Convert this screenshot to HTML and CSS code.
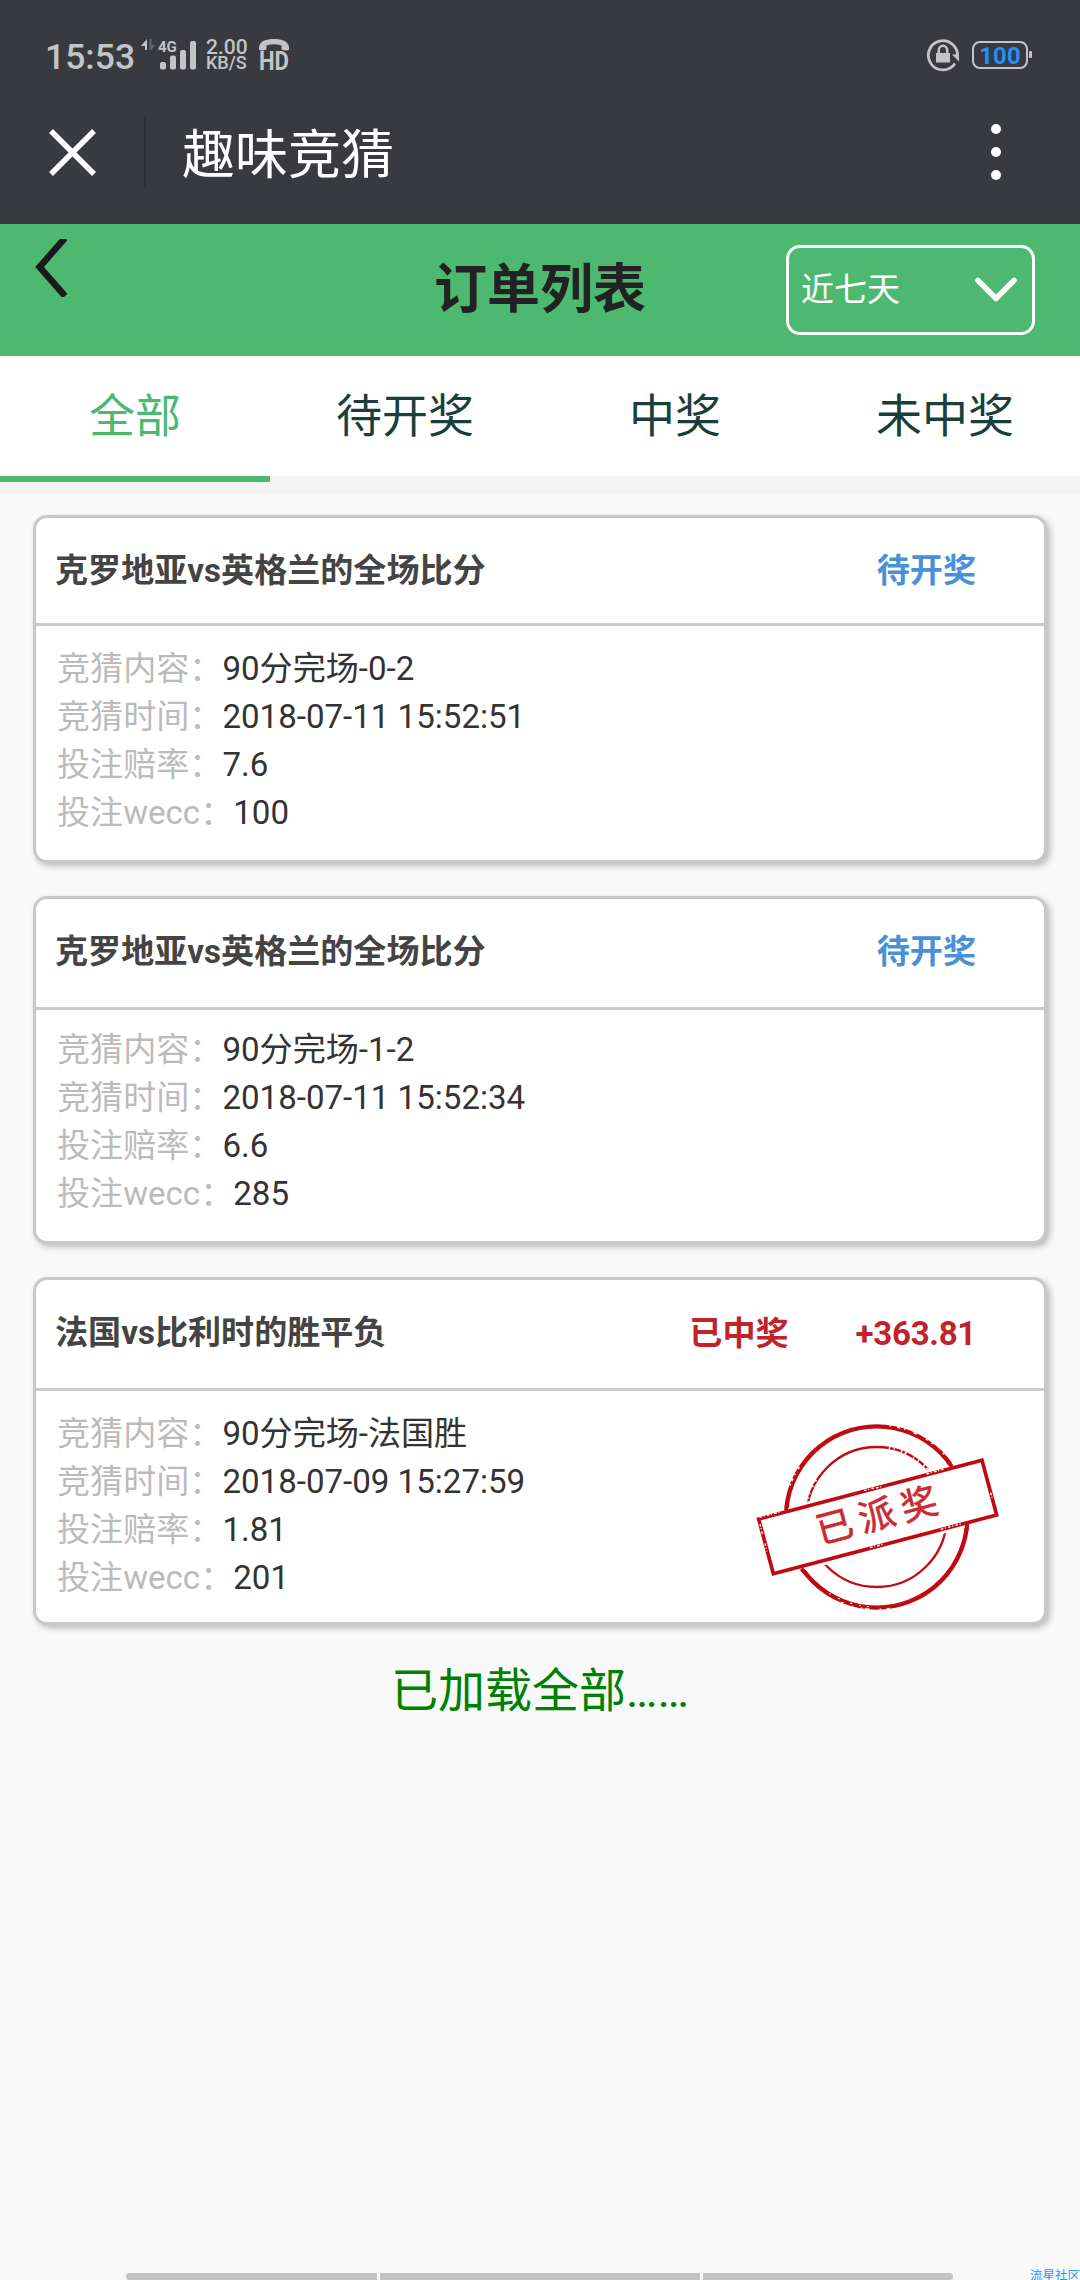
FILE: index.html
```html
<!DOCTYPE html>
<html lang="zh-CN">
<head>
    <meta charset="UTF-8">
    <meta name="viewport" content="width=device-width, initial-scale=1.0">
    <title>趣味竞猜</title>
    <link rel="stylesheet" href="styles.css">
</head>
<body>
    <!-- Phone status bar -->
    <div class="status-bar">
        <span class="time">15:53</span>
        <svg class="signal" width="58" height="34" viewBox="0 0 58 34">
            <path d="M6 1v11H4V8H0z" fill="#c4c4c6"/>
            <path d="M8.500 1v11h1.500l4-5H10.500V1z" fill="#66676b"/>
            <text x="17" y="14" class="net">4G</text>
            <g fill="#c4c4c6">
                <rect x="19" y="24" width="6" height="7.500" rx="2"/>
                <rect x="29" y="17.500" width="6" height="14" rx="2"/>
                <rect x="39" y="12" width="6" height="19.500" rx="2"/>
                <rect x="49" y="3" width="6" height="28.500" rx="2"/>
            </g>
        </svg>
        <div class="speed">
            <span class="rate">2.00</span>
            <span class="unit">KB/S</span>
        </div>
        <svg class="volte" width="31" height="34" viewBox="0 0 31 34">
            <path d="M0 9C1 3 7 1 15 1s14 2 15 8v3q-4 1-7.500-.500V7.500Q15 5 7.500 7.500v4Q4 13 0 12z" fill="#c4c4c6"/>
            <text x="0" y="32" class="hd" textLength="30" lengthAdjust="spacingAndGlyphs">HD</text>
        </svg>
        <svg class="lock" width="34" height="34" viewBox="0 0 34 34">
            <path d="M31.500 18A14.600 14.600 0 1 0 29 25.500" fill="none" stroke="#c4c4c6" stroke-width="2.800"/>
            <path d="M26 16.500h7v7z" fill="#c4c4c6"/>
            <rect x="10" y="15" width="14" height="9.500" fill="#c4c4c6"/>
            <path d="M12.800 15v-3a4.200 4.200 0 0 1 8.400 0v3" fill="none" stroke="#c4c4c6" stroke-width="2.500"/>
        </svg>
        <div class="battery">100</div>
    </div>

    <!-- Browser title -->
    <div class="nav-bar">
        <svg class="close" width="47" height="47" viewBox="0 0 47 47">
            <path d="M2 2l43 43M45 2L2 45" stroke="#fff" stroke-width="5.500"/>
        </svg>
        <span class="line"></span>
        <span class="nav-title">趣味竞猜</span>
        <div class="more"><i></i><i></i><i></i></div>
    </div>

    <div class="header">
        <svg class="back" width="32" height="58" viewBox="0 0 32 58">
            <path d="M30 -1L4.500 28L30 57" fill="none" stroke="#1a1a1a" stroke-width="6.500"/>
        </svg>
        <h1>订单列表</h1>
        <div class="select">
            <span>近七天</span>
            <svg width="42" height="26" viewBox="0 0 42 26">
                <path d="M3 3.500L21 21.500L39 3.500" fill="none" stroke="#fff" stroke-width="5.500" stroke-linecap="round" stroke-linejoin="round"/>
            </svg>
        </div>
    </div>

    <div class="tabs">
        <div class="tab active">全部</div>
        <div class="tab">待开奖</div>
        <div class="tab">中奖</div>
        <div class="tab">未中奖</div>
    </div>

    <div class="list">
        <div class="card">
            <div class="card-head">
                <span class="match">克罗地亚vs英格兰的全场比分</span>
                <span class="wait">待开奖</span>
            </div>
            <div class="card-body">
                <p><label>竞猜内容：</label>90分完场-0-2</p>
                <p><label>竞猜时间：</label>2018-07-11 15:52:51</p>
                <p><label>投注赔率：</label>7.6</p>
                <p><label>投注wecc：</label>100</p>
            </div>
        </div>

        <div class="card tall">
            <div class="card-head">
                <span class="match">克罗地亚vs英格兰的全场比分</span>
                <span class="wait">待开奖</span>
            </div>
            <div class="card-body">
                <p><label>竞猜内容：</label>90分完场-1-2</p>
                <p><label>竞猜时间：</label>2018-07-11 15:52:34</p>
                <p><label>投注赔率：</label>6.6</p>
                <p><label>投注wecc：</label>285</p>
            </div>
        </div>

        <div class="card win">
            <div class="card-head">
                <span class="match">法国vs比利时的胜平负</span>
                <span class="won">已中奖</span>
                <span class="amount">+363.81</span>
            </div>
            <div class="card-body">
                <p><label>竞猜内容：</label>90分完场-法国胜</p>
                <p><label>竞猜时间：</label>2018-07-09 15:27:59</p>
                <p><label>投注赔率：</label>1.81</p>
                <p><label>投注wecc：</label>201</p>
            </div>
            <svg class="stamp" width="245" height="188" viewBox="45 69 735 564">
                <g fill="none" stroke="#c00a10">
                    <circle cx="410" cy="351" r="272" stroke-width="13"/>
                    <circle cx="410" cy="351" r="210" stroke-width="7"/>
                </g>
                <!-- worn ink -->
                <g fill="none" stroke="#fff">
                    <circle cx="410" cy="351" r="277" stroke-width="4" stroke-dasharray="9 17 4 31 13 8 5 23 3 27 8 3000" transform="rotate(82 410 351)"/>
                    <circle cx="410" cy="351" r="270" stroke-width="3" stroke-dasharray="6 19 5 21 7 33 6 25 4 3000" transform="rotate(95 410 351)"/>
                    <circle cx="410" cy="351" r="276" stroke-width="4" stroke-dasharray="5 19 9 12 4 26 11 31 6 14 5 40 7 3000" transform="rotate(-82 410 351)"/>
                    <circle cx="410" cy="351" r="276" stroke-width="4" stroke-dasharray="5 9 9 12 4 16 8 3000" transform="rotate(-160 410 351)"/>
                    <circle cx="410" cy="351" r="210" stroke-width="8" stroke-dasharray="4 11 3 19 5 8 6 23 3 13 4 18 5 9 4 3000" transform="rotate(-80 410 351)"/>
                    <circle cx="410" cy="351" r="212" stroke-width="4" stroke-dasharray="4 11 3 19 5 14 6 3000" transform="rotate(-165 410 351)"/>
                </g>
                <path d="M32 350L728 164L795 352L97 537z" fill="#fff"/>
                <path d="M138 332l4-20M636 200l-12-14M184 506l14 16M682 372l-3 20" fill="none" stroke="#c00a10" stroke-width="12"/>
                <path d="M56 357L726 181L770 345L100 521z" fill="#fff" stroke="#c00a10" stroke-width="11"/>
                <path d="M58 352L120 336M372 272l30-8M408 264l22-6M560 222l50-14M390 443l18-6M412 438l20-6M602 388l60-16M75 430l6 24M752 278l5 18M60 372l7 30" stroke="#fff" stroke-width="4" stroke-dasharray="8 5 3 7"/>
                <text class="stamp-text" transform="translate(241 432) rotate(-15)">已派奖</text>
            </svg>
        </div>
    </div>

    <p class="loaded">已加载全部……</p>

    <div class="bottom">
        <div class="home-bar"><i></i><i></i><i></i></div>
        <span class="watermark">流星社区</span>
    </div>
</body>
</html>
```

FILE: styles.css
```css
* {
    margin: 0;
    padding: 0;
    box-sizing: border-box;
}

body {
    width: 1080px;
    height: 2280px;
    display: flex;
    flex-direction: column;
    overflow: hidden;
    background: #f9f9f9;
    font-family: Roboto, "Noto Sans CJK SC", sans-serif;
    color: #333;
}

svg {
    display: block;
    flex: none;
}

/* status bar */
.status-bar {
    height: 80px;
    padding: 38px 48px 0 45px;
    display: flex;
    align-items: flex-start;
    background: #393a3f;
    color: #c4c4c6;
}

.time {
    width: 96px;
    font-size: 35.5px;
    font-weight: 500;
    line-height: 38px;
}

.net {
    font-size: 15px;
    font-weight: bold;
    fill: #c4c4c6;
}

.speed {
    width: 53px;
    margin-left: 7px;
}

.speed span {
    display: block;
    line-height: 18px;
}

.rate {
    font-size: 21px;
    font-weight: 500;
}

.speed .unit {
    font-size: 18px;
    font-weight: 500;
    line-height: 14px;
}

.hd {
    font-size: 25px;
    font-weight: bold;
    fill: #c4c4c6;
}

.lock {
    margin-left: auto;
}

.battery {
    width: 56px;
    height: 28px;
    margin: 3px 4px 0 12px;
    border: 2px solid #c4c4c6;
    border-radius: 8px;
    position: relative;
    color: #1e90ff;
    font-size: 24px;
    font-weight: bold;
    line-height: 26px;
    text-align: center;
}

.battery::after {
    content: '';
    position: absolute;
    right: -6px;
    top: 8px;
    width: 3px;
    height: 7px;
    border-radius: 1px;
    background: #c4c4c6;
}

/* browser title */
.nav-bar {
    height: 144px;
    padding: 0 79px 0 49px;
    display: flex;
    align-items: center;
    background: #393a3f;
    color: #fff;
}

.line {
    width: 2px;
    height: 72px;
    margin: 0 36px 0 48px;
    background: #2e2f33;
}

.nav-title {
    padding-top: 7px;
    font-size: 53px;
    line-height: 72px;
}

.more {
    margin-left: auto;
    display: grid;
    gap: 13px;
}

.more i {
    width: 10px;
    height: 10px;
    border-radius: 50%;
    background: #fff;
}

/* page header */
.header {
    height: 132px;
    padding: 0 45px 0 35px;
    display: grid;
    grid-template-columns: 249px 1fr 249px;
    align-items: center;
    background: #4db970;
}

.back {
    align-self: start;
    margin-top: 15px;
}

h1 {
    padding-left: 10px;
    color: #222;
    font-size: 53px;
    line-height: 70px;
    text-align: center;
}

.select {
    height: 90px;
    padding: 0 15px 0 12px;
    display: flex;
    justify-content: space-between;
    align-items: center;
    border: 3px solid #fff;
    border-radius: 14px;
    color: #fff;
    font-size: 33px;
}

.select span {
    padding-bottom: 6px;
}

/* tabs */
.tabs {
    height: 138px;
    display: grid;
    grid-template-columns: repeat(4, 1fr);
    background: linear-gradient(#fff 120px, #f4f4f4 120px);
}

.tab {
    height: 126px;
    color: #183f3b;
    font-size: 46px;
    line-height: 121px;
    text-align: center;
}

.tab.active {
    color: #4db970;
    border-bottom: 6px solid #4db970;
}

/* orders */
.list {
    padding: 21px 33px 0;
    display: grid;
    gap: 33px;
}

.card {
    height: 348px;
    position: relative;
    background: #fff;
    border: 3px solid #c8c8c8;
    border-radius: 14px;
    box-shadow: 3px 3px 6px rgba(0, 0, 0, 0.25);
}

.card-head {
    height: 108px;
    padding: 0 68px 0 19px;
    display: flex;
    border-bottom: 3px solid #ccc;
    font-size: 33.1px;
    font-weight: bold;
    line-height: 105px;
}

.tall .card-head,
.win .card-head {
    height: 111px;
}

.match {
    margin-right: auto;
    color: #444;
}

.wait {
    color: #4a90d9;
}

.won,
.amount {
    color: #c1232a;
    line-height: 107px;
}

.amount {
    margin-left: 67px;
    letter-spacing: -0.3px;
}

.card-body {
    padding: 19px 21px;
    font-size: 33.1px;
    line-height: 48px;
}

.tall .card-body {
    padding-top: 16px;
}

label {
    color: #bbb;
}

.stamp {
    position: absolute;
    left: 719px;
    top: 143px;
}

.stamp-text {
    fill: #cb2a32;
    stroke: #cb2a32;
    stroke-width: 2px;
    font-size: 110px;
    letter-spacing: 21px;
}

.loaded {
    margin-top: 31px;
    color: #008000;
    font-size: 47px;
    line-height: 70px;
    text-align: center;
}

/* bottom of the screen */
.bottom {
    height: 12px;
    margin-top: auto;
    padding-left: 126px;
    display: flex;
    align-items: flex-end;
    justify-content: space-between;
}

.home-bar {
    width: 827px;
    height: 7px;
    display: grid;
    grid-template-columns: 251px 320px 1fr;
    gap: 3px;
    border-radius: 4px;
    overflow: hidden;
}

.home-bar i {
    background: #c2c2c2;
}

.watermark {
    color: #1e9bf5;
    font-size: 12.5px;
    line-height: 9px;
}
```
